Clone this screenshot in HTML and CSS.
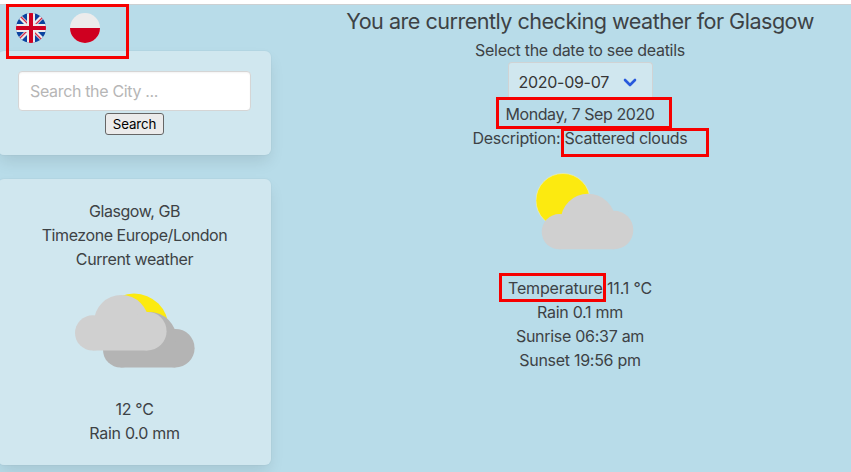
FILE: index.html
```html
<!DOCTYPE html>
<html lang="en">
<head>
<meta charset="utf-8">
<title>Weather</title>
<link rel="stylesheet" href="styles.css">
</head>
<body>
<div class="app">
  <aside class="sidebar">
    <nav class="languages">
      <svg class="flag" viewBox="0 0 30 30" role="img" aria-label="English">
        <clipPath id="round"><circle cx="15" cy="15" r="15"/></clipPath>
        <g clip-path="url(#round)">
          <path fill="#0b43a0" d="M0 0h30v30H0z"/>
          <path stroke="#ececec" stroke-width="4.2" d="M2 2l26 26M28 2L2 28"/>
          <path stroke="#d52b48" stroke-width="1.3" d="M4 3l9 9M27 4l-9 9M3 26l9-9M18 19l8 8"/>
          <path stroke="#ececec" stroke-width="8" d="M15 0v30M0 15h30"/>
          <path stroke="#cf0020" stroke-width="4" d="M15 0v30M0 15h30"/>
        </g>
      </svg>
      <svg class="flag" viewBox="0 0 30 30" role="img" aria-label="Polski">
        <circle cx="15" cy="15" r="15" fill="#ececec"/>
        <path fill="#cf0020" d="M0 15h30a15 15 0 0 1-30 0z"/>
      </svg>
    </nav>
    <form class="card search">
      <input class="search-input" type="text" placeholder="Search the City ...">
      <button class="search-button" type="button">Search</button>
    </form>
    <section class="card current">
      <p class="city">Glasgow, GB</p>
      <p class="timezone">Timezone Europe/London</p>
      <p class="now">Current weather</p>
      <svg class="current-icon" viewBox="0 0 120 76">
        <circle cx="59" cy="35" r="34.500" fill="#fcea10"/>
        <use href="#cloud" fill="#b4b4b4" x="22.300" y="-1.800"/>
        <use href="#cloud" fill="#d0d0d0" x="-5.700" y="-18.800"/>
      </svg>
      <p class="degrees">12 °C</p>
      <p class="rain-now">Rain 0.0 mm</p>
    </section>
  </aside>
  <main class="forecast">
    <h1 class="title">You are currently checking weather for Glasgow</h1>
    <p class="hint">Select the date to see deatils</p>
    <div class="date-select"><span>2020-09-07</span>
      <svg class="chevron" viewBox="0 0 14 9"><path d="M2 2l5 5 5-5"/></svg>
    </div>
    <p class="date">Monday, 7 Sep 2020</p>
    <p class="description">Description: Scattered clouds</p>
    <svg class="forecast-icon" viewBox="0 0 98 77">
      <defs>
        <g id="cloud">
          <circle cx="23.300" cy="58.700" r="17.600"/>
          <circle cx="52" cy="48" r="27.300"/>
          <circle cx="78" cy="57" r="19.300"/>
          <path d="M23.300 50H78v26.300H23.300z"/>
        </g>
      </defs>
      <circle cx="27" cy="27.500" r="27" fill="#fcea10" stroke="#f4f3b2" stroke-width=".6"/>
      <use href="#cloud" fill="#d0d0d0"/>
    </svg>
    <p class="temperature">Temperature 11.1 °C</p>
    <p class="rain">Rain 0.1 mm</p>
    <p class="sunrise">Sunrise 06:37 am</p>
    <p class="sunset">Sunset 19:56 pm</p>
  </main>
  <div class="mark mark-languages"></div>
  <div class="mark mark-date"></div>
  <div class="mark mark-description"></div>
  <div class="mark mark-temperature"></div>
</div>
</body>
</html>
```
FILE: styles.css
```css
* { box-sizing: border-box; }
body { margin: 0; background: #fff; color: #3d4245; font: 16px/24px Inter, "Liberation Sans", sans-serif; letter-spacing: -.28px; }
p, h1 { margin: 0; white-space: nowrap; }
.app { position: relative; height: 472px; border-top: 4px solid #fff; background: #b8dce9; display: flex; overflow: hidden; box-shadow: inset 0 1px #ccd0d2; }
.sidebar { width: 271px; flex: none; }
.languages { height: 47px; padding: 9px 0 0 16px; display: flex; gap: 24px; }
.flag { width: 30px; height: 30px; flex: none; }
.card { margin-left: -2px; background: #d0e7ef; border-radius: 6px; box-shadow: 0 8px 16px -2px rgba(10,10,10,.1), 0 0 0 1px rgba(10,10,10,.02); display: flex; flex-direction: column; align-items: center; }
.search { height: 104px; padding-top: 20px; margin-bottom: 24px; }
.search-input { width: 233px; height: 40px; border: 1px solid #d5d5d5; border-radius: 4px; padding: 0 11px; font: inherit; letter-spacing: -.34px; background: #fff; box-shadow: inset 0 1px 2px rgba(10,10,10,.05); }
.search-input::placeholder { color: #b6b6b6; opacity: 1; }
.search-button { width: 59px; height: 22px; margin-top: 2px; padding: 0; border: 1px solid #666; border-radius: 3px; background: #ebebeb; color: #000; font: 13.3px/18px Inter, sans-serif; letter-spacing: -.1px; }
.current { height: 286px; padding-top: 20px; }
.city { letter-spacing: -.42px; }
.timezone { letter-spacing: -.43px; }
.now { letter-spacing: -.38px; }
.current-icon { width: 120px; height: 76px; margin: 22px 0 28px; flex: none; }
.forecast { width: 542px; margin-left: 38px; padding-top: 3px; display: flex; flex-direction: column; align-items: center; }
.title { font-size: 21.6px; line-height: 28px; font-weight: 400; letter-spacing: -.52px; }
.hint { margin-top: 3px; }
.date-select { width: 145px; height: 36px; margin-bottom: 4px; padding: 0 15px 0 10px; border: 1px solid #d0d3d4; border-bottom: 0; border-radius: 4px 4px 0 0; background: #d0e7ef; color: #363636; display: flex; align-items: center; justify-content: space-between; line-height: 38px; padding-top: 3px; }
.chevron { width: 14px; height: 9px; fill: none; stroke: #2859dc; stroke-width: 2.6; stroke-linecap: round; stroke-linejoin: round; }
.date { letter-spacing: -.42px; }
.forecast-icon { width: 98px; height: 77px; margin: 23px 0 26px 10px; flex: none; }
.temperature { letter-spacing: -.15px; }
.mark { position: absolute; border: 3px solid #f60000; }
.mark-languages { left: 6px; top: 0; width: 123px; height: 55px; }
.mark-date { left: 496px; top: 93px; width: 176px; height: 32px; }
.mark-description { left: 561px; top: 124px; width: 148px; height: 29px; }
.mark-temperature { left: 499px; top: 269px; width: 107px; height: 29px; }
```
